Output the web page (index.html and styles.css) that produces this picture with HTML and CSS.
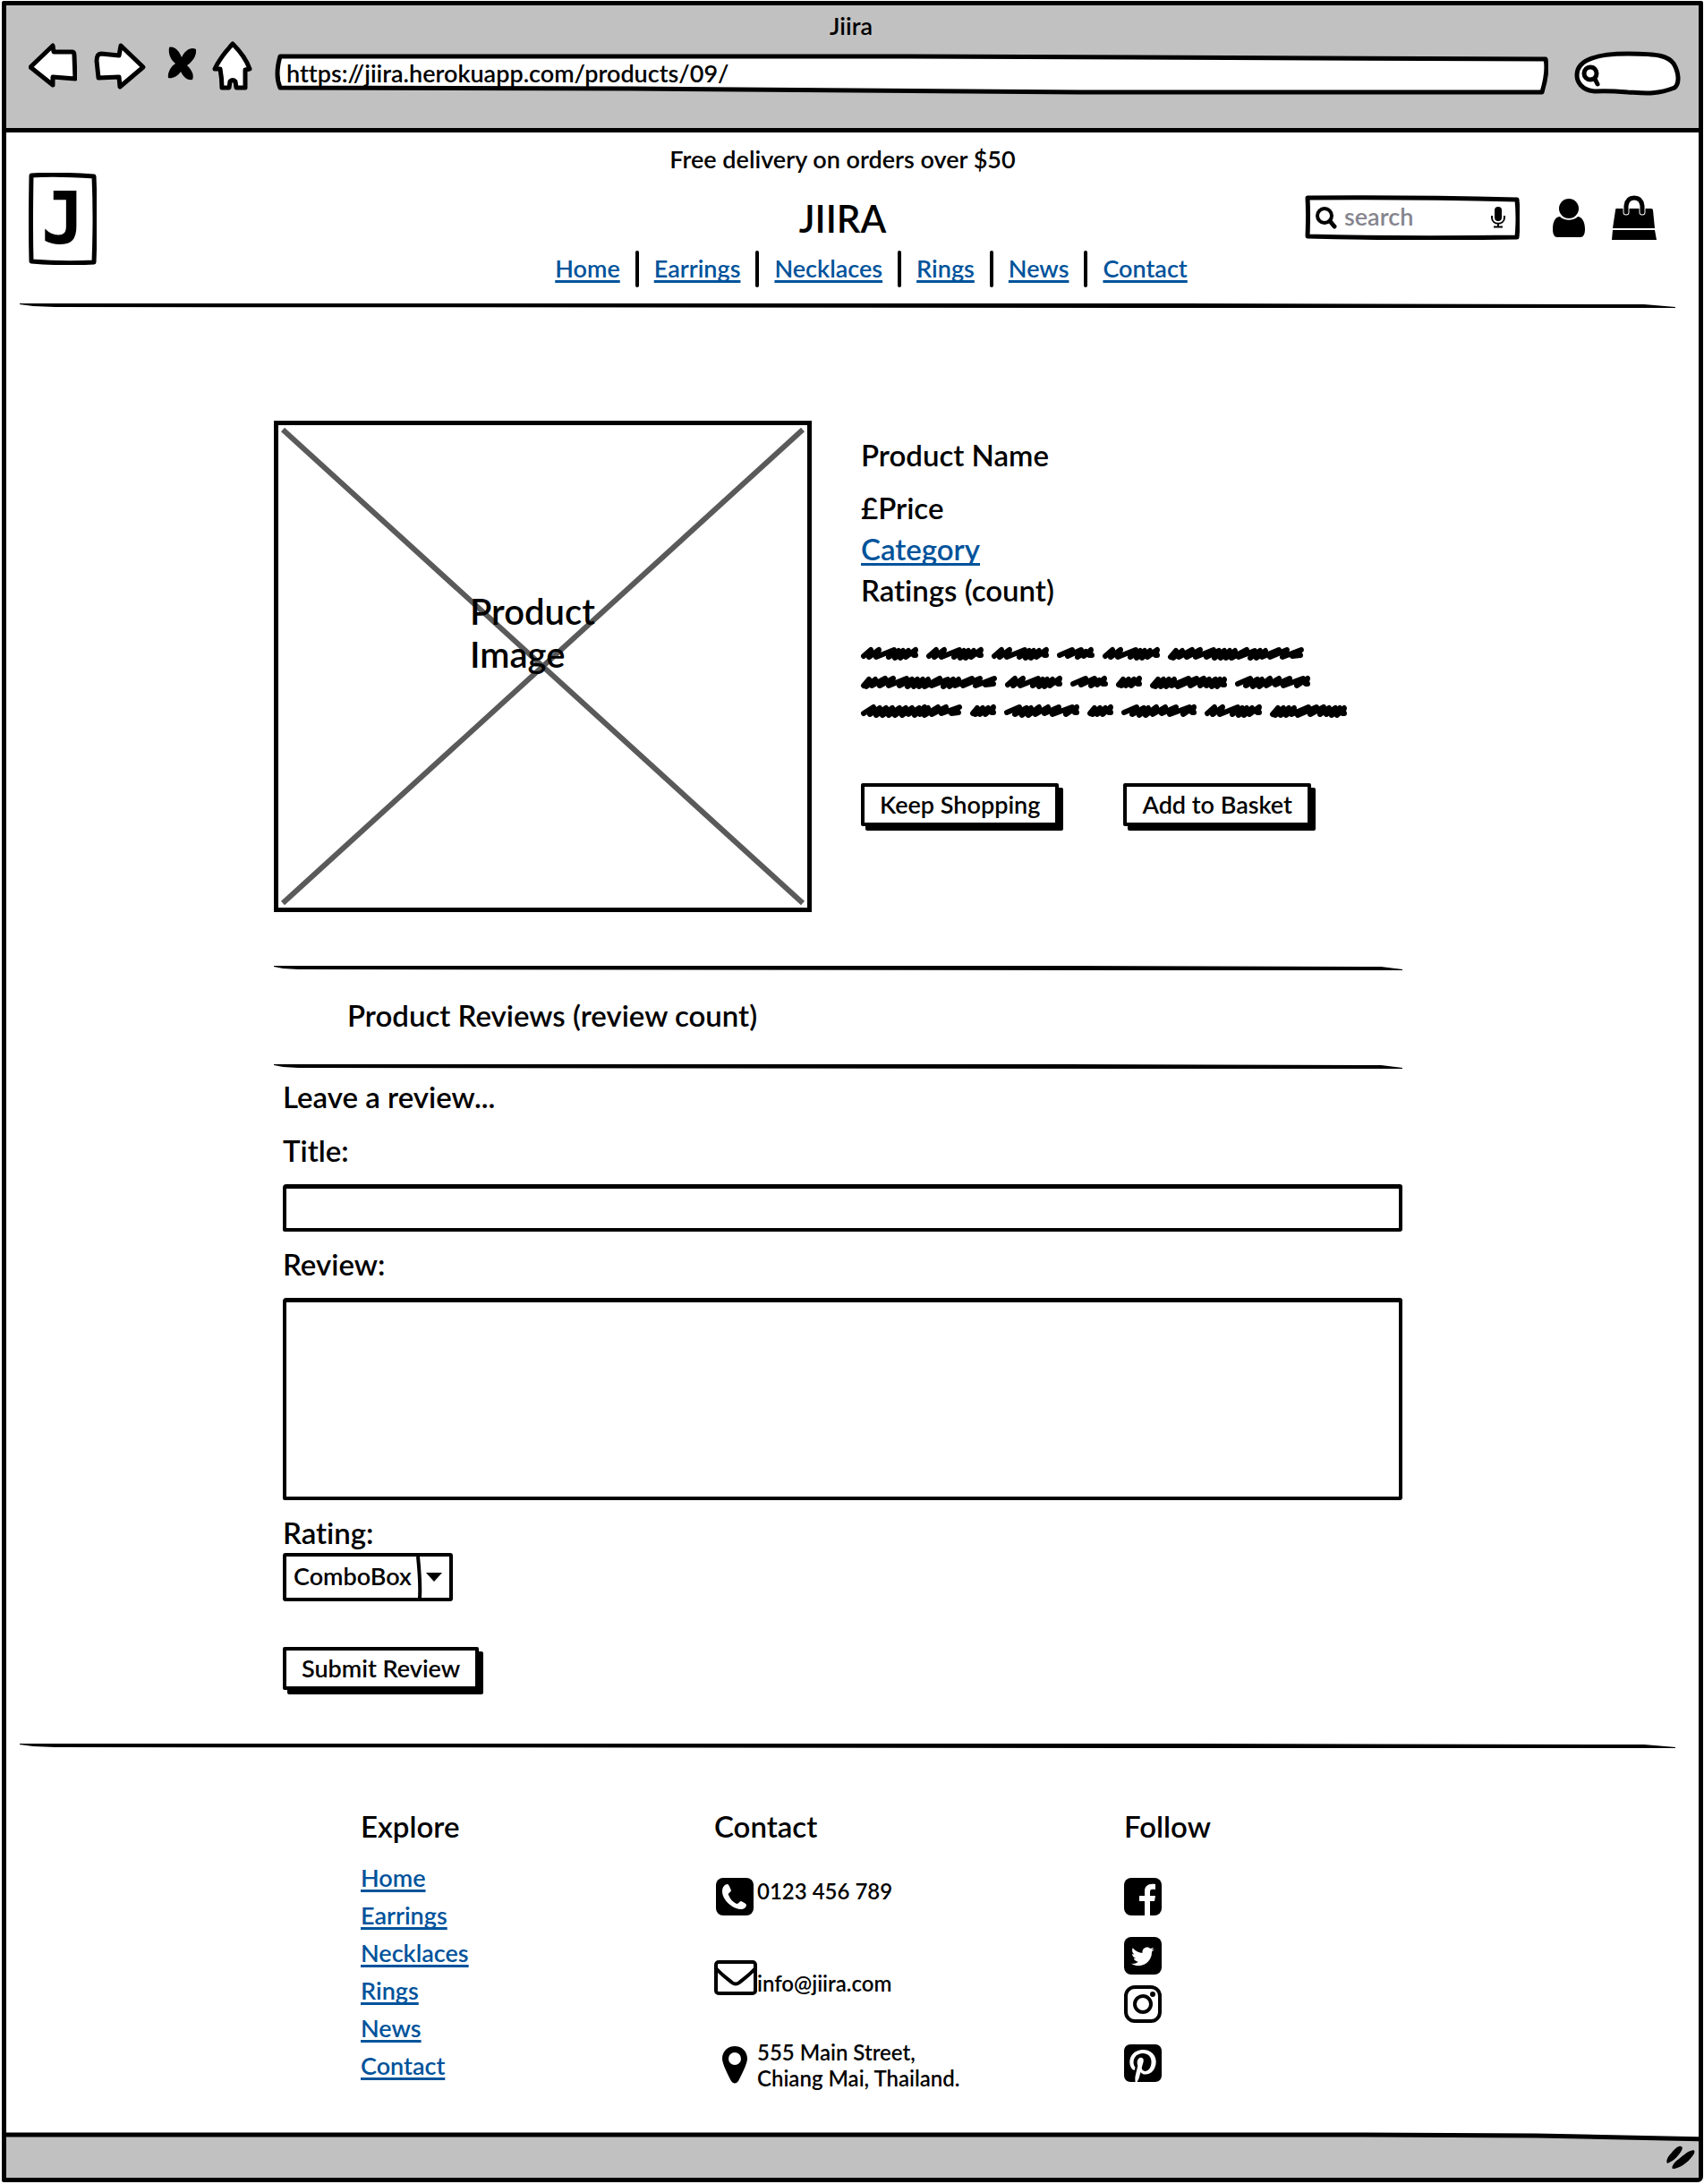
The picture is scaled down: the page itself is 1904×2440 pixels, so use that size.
FILE: index.html
```
<!DOCTYPE html>
<html lang="en">
<head>
<meta charset="utf-8">
<meta name="viewport" content="width=device-width, initial-scale=1">
<title>Jiira</title>
<link rel="stylesheet" href="styles.css">
</head>
<body>
<svg class="defs" aria-hidden="true">
  <symbol id="w29" viewBox="0 0 29 14"><path d="M3 10L8 4 6 11 14 4 11 11 20 4 17 11 26 3 24 9 26 9"/></symbol>
  <symbol id="w42" viewBox="0 0 42 14"><path d="M3 9L17 3 12 10 27 3 23 11 32 5 30 10 38 3 36 9 39 9"/></symbol>
  <symbol id="w64" viewBox="0 0 64 14"><path d="M3 10L11 3 9 11 20 3 17 11 37 3 31 11 42 4 38 12 47 4 44 12 53 4 50 11 61 3 59 9 61 9"/></symbol>
  <symbol id="w84" viewBox="0 0 84 14"><path d="M3 9L17 3 12 11 25 4 20 12 30 4 27 12 39 3 35 11 49 3 45 10 61 3 54 11 76 3 69 11 81 3 79 9 81 9"/></symbol>
  <symbol id="w86" viewBox="0 0 86 14"><path d="M3 11L9 4 6 12 15 4 12 12 21 4 18 12 27 4 24 11 43 3 31 12 52 3 45 11 60 3 56 11 66 4 63 11 73 4 69 12 78 4 75 12 83 4 81 10 83 10"/></symbol>
  <symbol id="w113" viewBox="0 0 113 14"><path d="M3 10L14 3 10 11 21 4 17 12 28 4 24 12 35 4 31 12 43 4 38 12 50 4 46 12 57 4 53 11 65 4 60 12 71 3 66 11 75 4 71 12 86 3 79 11 95 3 90 10 110 3 101 10 109 9"/></symbol>
  <symbol id="w152" viewBox="0 0 152 14"><path d="M3 11L9 4 6 12 16 4 12 11 27 3 21 11 36 3 31 11 51 3 43 11 57 4 52 12 63 4 59 12 69 4 65 12 75 4 71 12 88 3 79 11 97 4 92 12 103 4 99 12 109 4 105 11 124 3 114 11 133 3 128 11 149 3 139 10 148 9"/></symbol>
</svg>

<div class="window">
  <header class="chrome">
    <p class="chrome-title">Jiira</p>
    <div class="toolbar">
      <button class="icon-button" type="button" aria-label="Back"><svg width="54" height="61" viewBox="0 0 54 61"><path class="outline" d="M2 29L27 5 28 12 49 12Q51 12 51 16L52 42 27 40 27 49Z"/></svg></button>
      <button class="icon-button" type="button" aria-label="Forward"><svg width="60" height="61" viewBox="0 0 60 61"><path class="outline" d="M4 22Q4 14 9 14L29 16 31 5 56 29 30 51 29 40 6 41Z"/></svg></button>
      <button class="icon-button" type="button" aria-label="Stop"><svg width="37" height="61" viewBox="0 0 37 61"><path d="M7 7C13 5 18 11 21 18C25 10 31 6 37 9C38 16 33 23 27 27C33 33 35 38 33 43C27 44 23 40 20 34C16 40 10 42 6 41C5 35 9 28 14 25C8 20 6 14 7 7Z"/></svg></button>
      <button class="icon-button" type="button" aria-label="Home"><svg width="45" height="61" viewBox="0 0 45 61"><path class="outline" d="M23 3Q37 17 42 31L37 32 37 52 27 52 26 45Q23 42 20 45L19 52 11 52Q11 42 9 31L3 31Q9 18 23 3Z"/></svg></button>
      <input class="url" type="text" aria-label="Address" value="https://jiira.herokuapp.com/products/09/">
      <input class="chrome-search" type="search" aria-label="Search the web">
    </div>
  </header>

  <div class="page">
    <header class="site-header">
      <div class="logo-side"><a class="logo" href="#">J</a></div>
      <div class="masthead">
        <p class="notice">Free delivery on orders over $50</p>
        <h1>JIIRA</h1>
        <nav class="main-nav" aria-label="Main">
          <a href="#">Home</a><a href="#">Earrings</a><a href="#">Necklaces</a><a href="#">Rings</a><a href="#">News</a><a href="#">Contact</a>
        </nav>
      </div>
      <div class="tools">
        <label class="search">
          <svg width="24" height="25" viewBox="0 0 24 25" aria-hidden="true"><circle cx="10" cy="10" r="8" fill="none" stroke="#000" stroke-width="4"/><path d="M16 16L21 22" stroke="#000" stroke-width="5" stroke-linecap="round"/></svg>
          <input type="search" placeholder="search" aria-label="Search products">
          <svg width="16" height="24" viewBox="0 0 16 24" aria-hidden="true"><rect x="4" y="0" width="8" height="16" rx="4"/><path d="M1 10V12C1 21 15 21 15 12V10M8 18V22M3 22.500H13" fill="none" stroke="#000" stroke-width="2"/></svg>
        </label>
        <a href="#" aria-label="Account"><svg width="43" height="43" viewBox="0 0 43 43"><ellipse cx="25" cy="11" rx="11" ry="11"/><path d="M7 34C7 24 11 20 15 20C20 25 30 25 35 20C39 20 43 25 43 34C43 40 41 43 38 43H12C9 43 7 40 7 34Z"/></svg></a>
        <a href="#" aria-label="Basket"><svg width="50" height="50" viewBox="0 0 50 50"><path d="M5 15H44Q46 15 46 17L48 37H1L4 17Q4 15 5 15ZM1 39H48L50 50H0Z"/><path d="M16 19V12Q17 3 25 3T34 12V19" fill="none" stroke="#fff" stroke-width="7" stroke-linecap="round"/><path d="M16 19V12Q17 3 25 3T34 12V19" fill="none" stroke="#000" stroke-width="5" stroke-linecap="round"/></svg></a>
      </div>
    </header>
    <hr>

    <main class="content">
      <section class="product">
        <figure class="picture">
          <svg viewBox="0 0 591 539" preserveAspectRatio="none" aria-hidden="true"><path d="M5 5L586 534M586 5L5 534"/></svg>
          <figcaption>Product<br>Image</figcaption>
        </figure>
        <div class="info">
          <h2>Product Name</h2>
          <p class="price">£Price</p>
          <p class="tight"><a href="#">Category</a></p>
          <p class="tight">Ratings (count)</p>
          <div class="scribble" role="img" aria-label="Description">
            <div><svg width="64"><use href="#w64"/></svg><svg width="64"><use href="#w64"/></svg><svg width="64"><use href="#w64"/></svg><svg width="42"><use href="#w42"/></svg><svg width="64"><use href="#w64"/></svg><svg width="152"><use href="#w152"/></svg></div>
            <div><svg width="152"><use href="#w152"/></svg><svg width="64"><use href="#w64"/></svg><svg width="42"><use href="#w42"/></svg><svg width="29"><use href="#w29"/></svg><svg width="86"><use href="#w86"/></svg><svg width="84"><use href="#w84"/></svg></div>
            <div><svg width="113"><use href="#w113"/></svg><svg width="29"><use href="#w29"/></svg><svg width="84"><use href="#w84"/></svg><svg width="29"><use href="#w29"/></svg><svg width="84"><use href="#w84"/></svg><svg width="64"><use href="#w64"/></svg><svg width="86"><use href="#w86"/></svg></div>
          </div>
          <div class="actions">
            <button class="button" type="button">Keep Shopping</button>
            <button class="button" type="button">Add to Basket</button>
          </div>
        </div>
      </section>

      <section>
        <hr>
        <h2 class="reviews-title">Product Reviews (review count)</h2>
        <hr>
        <form class="review-form">
          <h2>Leave a review...</h2>
          <label for="title">Title:</label>
          <input id="title" type="text">
          <label class="after-field" for="review">Review:</label>
          <textarea id="review"></textarea>
          <label class="after-field" for="rating">Rating:</label>
          <select id="rating"><option>ComboBox</option></select>
          <button class="button" type="submit">Submit Review</button>
        </form>
      </section>
    </main>

    <hr>
    <footer class="site-footer">
      <section>
        <h2>Explore</h2>
        <ul class="links">
          <li><a href="#">Home</a></li>
          <li><a href="#">Earrings</a></li>
          <li><a href="#">Necklaces</a></li>
          <li><a href="#">Rings</a></li>
          <li><a href="#">News</a></li>
          <li><a href="#">Contact</a></li>
        </ul>
      </section>
      <section>
        <h2>Contact</h2>
        <ul class="contact">
          <li><svg width="48" height="42" viewBox="0 0 48 42" aria-hidden="true"><rect x="2" width="42" height="42" rx="8"/><path fill="#fff" d="M9 15C9 10 12 7 15 7C17 8 18 12 19 14C18 17 15 17 16 19C18 24 21 27 25 29C28 29 28 26 30 26C32 27 35 28 36 30C36 33 33 35 30 35C21 35 9 25 9 15Z"/></svg><span>0123 456 789</span></li>
          <li class="low"><svg width="48" height="40" viewBox="0 0 48 40" aria-hidden="true"><g fill="none" stroke="#000"><rect x="2" y="2" width="44" height="35" rx="3" stroke-width="4"/><path stroke-width="4" d="M2 9C8 16 14 20 20 25Q24 28 28 25C34 20 40 16 46 9"/></g></svg><span>info@jiira.com</span></li>
          <li class="middle"><svg width="48" height="42" viewBox="0 0 48 42" aria-hidden="true"><path fill-rule="evenodd" d="M23 0C31 0 37 6 37 14C37 20 30 33 27 39Q23 44 19 39C16 33 9 20 9 14C9 6 15 0 23 0ZM23 7A7 7 0 1 0 23 21A7 7 0 1 0 23 7Z"/></svg><span>555 Main Street,<br>Chiang Mai, Thailand.</span></li>
        </ul>
      </section>
      <section>
        <h2>Follow</h2>
        <ul class="social">
          <li><a href="#" aria-label="Facebook"><svg width="42" height="42" viewBox="0 0 42 42"><rect width="42" height="42" rx="8"/><path fill="#fff" d="M23 42V26H17V20H23V15C23 9 27 6 35 7V13C30 12 29 13 29 16V20H35L34 26H29V42Z"/></svg></a></li>
          <li class="far"><a href="#" aria-label="Twitter"><svg width="42" height="42" viewBox="0 0 42 42"><rect width="42" height="42" rx="8"/><path fill="#fff" transform="translate(8 9) scale(.05)" d="M459.370 151.716c.325 4.548.325 9.097.325 13.645 0 138.720-105.583 298.558-298.558 298.558-59.452 0-114.680-17.219-161.137-47.106 8.447.974 16.568 1.299 25.340 1.299 49.055 0 94.213-16.568 130.274-44.832-46.132-.975-84.792-31.188-98.112-72.772 6.498.974 12.995 1.624 19.818 1.624 9.421 0 18.843-1.300 27.614-3.573-48.081-9.747-84.143-51.980-84.143-102.985v-1.299c13.969 7.797 30.214 12.670 47.431 13.319-28.264-18.843-46.781-51.005-46.781-87.391 0-19.492 5.197-37.360 14.294-52.954 51.655 63.675 129.300 105.258 216.365 109.807-1.624-7.797-2.599-15.918-2.599-24.040 0-57.828 46.782-104.934 104.934-104.934 30.213 0 57.502 12.670 76.670 33.137 23.715-4.548 46.456-13.320 66.599-25.340-7.798 24.366-24.366 44.833-46.132 57.827 21.117-2.273 41.584-8.122 60.426-16.243-14.292 20.791-32.161 39.308-52.628 54.253z"/></svg></a></li>
          <li><a href="#" aria-label="Instagram"><svg width="42" height="42" viewBox="0 0 42 42"><g fill="none" stroke="#000" stroke-width="4"><rect x="2" y="2" width="38" height="38" rx="10"/><circle cx="21" cy="21" r="9"/></g><circle cx="32" cy="10" r="3"/></svg></a></li>
          <li class="far"><a href="#" aria-label="Pinterest"><svg width="42" height="42" viewBox="0 32 448 448"><path d="M448 112v288c0 48-32 80-80 80H154.400c9.800-16.400 22.400-40 27.400-59.300 3-11.500 15.300-58.400 15.300-58.400 8 15.300 31.400 28.200 56.300 28.200 74.100 0 127.400-68.100 127.400-152.700 0-81.100-66.200-141.800-151.400-141.800-106 0-162.200 71.100-162.200 148.600 0 36 19.200 80.800 49.800 95.100 4.700 2.200 7.100 1.200 8.200-3.300.8-3.400 5-20.100 6.800-27.800.6-2.500.3-4.600-1.700-7-10.100-12.300-18.300-34.900-18.300-56 0-54.200 41-106.600 110.900-106.600 60.300 0 102.600 41.100 102.600 99.900 0 66.400-33.500 112.400-77.200 112.400-24.100 0-42.100-19.900-36.400-44.400 6.900-29.200 20.300-60.700 20.300-81.800 0-53-75.500-45.700-75.500 25 0 21.700 7.300 36.500 7.300 36.500-31.400 132.800-36.100 134.500-29.600 192.600l2.200.8H80c-48 0-80-32-80-80V112c0-48 32-80 80-80h288c48 0 80 32 80 80z"/></svg></a></li>
        </ul>
      </section>
    </footer>
  </div>

  <div class="status-bar">
    <svg width="34" height="28" viewBox="0 0 34 28" aria-hidden="true"><path d="M15 1C20 0 20 4 15 10C11 15 7 18 2 20C0 17 3 12 6 9C9 5 12 2 15 1ZM28 6C33 4 34 7 30 12C25 19 15 26 8 26C6 24 10 18 15 15C20 11 24 7 28 6Z"/></svg>
  </div>
</div>
</body>
</html>
```
FILE: styles.css
```
* { box-sizing: border-box; }

body {
  margin: 0;
  background: #fff;
  color: #000;
  font: 600 27px/36px Lato, "Open Sans", sans-serif;
  font-variant-ligatures: none;
}

h1, h2, p, ul, figure { margin: 0; padding: 0; }
ul { list-style: none; }
h1, h2 { font-weight: 600; }
h2, .info, label { font-size: 33px; line-height: 40px; }
svg { display: block; flex: none; }
input, textarea, select, button { font: inherit; color: inherit; font-variant-ligatures: none; }
.defs { position: absolute; width: 0; height: 0; }

a {
  color: #00539b;
  text-decoration-thickness: 3px;
  text-underline-offset: 3px;
  text-decoration-skip-ink: none;
}

/* Pen-stroke rule, tapered at both ends */
hr {
  height: 5px;
  margin: 0;
  border: 0;
  background: url("data:image/svg+xml,%3Csvg xmlns='http://www.w3.org/2000/svg' viewBox='0 0 1850 5' preserveAspectRatio='none'%3E%3Cpath d='M0 0L1300 0 1815 1 1850 4 1850 5 1400 5 40 4 15 3 0 1Z'/%3E%3C/svg%3E") 0 0 / 100% 100% no-repeat;
}

/* Browser window */
.window {
  display: flex;
  flex-direction: column;
  min-height: calc(100vh - 3px);
  margin: 1px 1px 2px 2px;
  border: 5px solid #000;
  border-radius: 2px 2px 6px 2px;
}

.chrome {
  padding: 6px 20px 36px 25px;
  border-bottom: 5px solid #000;
  background: #c1c1c1;
}

.chrome-title {
  padding-right: 8px;
  line-height: 34px;
  text-align: center;
}

.toolbar {
  display: flex;
  align-items: center;
  gap: 18px;
}

.icon-button {
  height: 61px;
  padding: 0;
  border: 0;
  background: none;
}

.outline {
  fill: #fff;
  stroke: #000;
  stroke-width: 5px;
  stroke-linejoin: round;
}

.url {
  flex: 1;
  min-width: 0;
  height: 46px;
  margin: 12px 11px 0 7px;
  padding: 0 13px 2px;
  border: 0;
  background: url("data:image/svg+xml,%3Csvg xmlns='http://www.w3.org/2000/svg' viewBox='0 0 1423 46' preserveAspectRatio='none'%3E%3Cpath d='M6 3L700 3 1420 6Q1423 20 1416 43L900 43 400 39 6 38Q0 24 6 3Z' fill='%23fff' stroke='%23000' stroke-width='5' stroke-linejoin='round'/%3E%3C/svg%3E") 0 0 / 100% 100% no-repeat;
}

.chrome-search {
  width: 119px;
  height: 50px;
  margin-top: 10px;
  padding: 0 12px 0 36px;
  border: 0;
  background: url("data:image/svg+xml,%3Csvg xmlns='http://www.w3.org/2000/svg' viewBox='0 0 119 50'%3E%3Cg stroke='%23000' stroke-width='5' stroke-linecap='round'%3E%3Cpath d='M23 45C8 44 3 34 3 27C3 12 20 3 60 3C96 3 105 6 111 14C117 24 118 36 112 41C92 49 78 47 60 46Q36 44 23 45Z' fill='%23fff'/%3E%3Ccircle cx='18' cy='25' r='7' fill='none'/%3E%3Cpath d='M23 31L26 37'/%3E%3C/g%3E%3C/svg%3E") 0 0 no-repeat;
}

/* Site */
.page {
  flex: 1;
  padding: 0 26px 0 15px;
}

.site-header {
  display: flex;
  align-items: flex-start;
  padding: 13px 21px 18px 10px;
}

.logo-side { flex: 1; padding-top: 32px; }

.logo {
  display: flex;
  align-items: center;
  justify-content: center;
  width: 76px;
  height: 103px;
  background: url("data:image/svg+xml,%3Csvg xmlns='http://www.w3.org/2000/svg' viewBox='0 0 76 103'%3E%3Cpath d='M3 3Q30 1 73 4Q75 50 73 100Q40 102 3 99Q2 60 3 3Z' fill='none' stroke='%23000' stroke-width='5' stroke-linejoin='round'/%3E%3C/svg%3E") 0 0 no-repeat;
  color: #000;
  font: 700 80px/96px "DejaVu Sans Mono", monospace;
  text-decoration: none;
}

.masthead { text-align: center; }
.notice { line-height: 34px; }

h1 {
  margin: 25px 0 11px;
  font-size: 42px;
  line-height: 49px;
}

.main-nav {
  display: flex;
  gap: 17px;
  height: 41px;
  margin-left: 64px;
  line-height: 39px;
}

.main-nav a + a::before {
  content: "";
  float: left;
  width: 4px;
  height: 41px;
  margin-right: 17px;
  border-radius: 2px;
  background: #000;
}

.tools {
  display: flex;
  flex: 1;
  align-items: center;
  justify-content: flex-end;
  gap: 30px;
  padding-top: 57px;
}

.search {
  display: flex;
  align-items: center;
  gap: 8px;
  width: 240px;
  height: 50px;
  padding: 0 16px 0 12px;
  background: url("data:image/svg+xml,%3Csvg xmlns='http://www.w3.org/2000/svg' viewBox='0 0 240 50'%3E%3Cpath d='M3 3Q110 2 237 5Q239 25 237 47Q110 49 3 46Q4 20 3 3Z' fill='%23fff' stroke='%23000' stroke-width='5' stroke-linejoin='round'/%3E%3C/svg%3E") 0 0 no-repeat;
  font-size: 27px;
}

.search input {
  flex: 1;
  min-width: 0;
  padding: 0 0 2px;
  border: 0;
  background: none;
}

.search input::placeholder { color: #85858f; opacity: 1; }

/* Product */
.content {
  max-width: 1282px;
  margin: 0 auto;
  padding-right: 21px;
}

.product {
  display: flex;
  gap: 55px;
  padding: 126px 0 60px;
}

.picture {
  display: grid;
  flex: 0 0 601px;
  height: 549px;
  border: 5px solid #000;
}

.picture > * { grid-area: 1 / 1; }
.picture svg { width: 100%; height: 100%; }
.picture path { stroke: #5a5a5a; stroke-width: 6px; }

.picture figcaption {
  padding: 184px 0 0 214px;
  font-size: 40px;
  line-height: 48px;
}

.info { flex: 1; padding-top: 18px; }
.price { margin-top: 19px; }
.tight { margin-top: 6px; }

.scribble {
  display: grid;
  gap: 18px;
  margin-top: 44px;
}

.scribble div { display: flex; gap: 9px; }
.scribble svg { height: 14px; overflow: visible; }

symbol { overflow: visible; }

symbol path {
  fill: none;
  stroke: #000;
  stroke-width: 6px;
  stroke-linecap: round;
  stroke-linejoin: round;
}

.actions {
  display: flex;
  gap: 72px;
  margin-top: 74px;
}

.button {
  height: 48px;
  padding: 0 17px;
  border: 4px solid #000;
  border-radius: 2px;
  background: #fff;
  box-shadow: 5px 5px 0 #000;
  font-size: 27px;
  line-height: 40px;
}

/* Reviews */
.reviews-title { padding: 30px 82px 35px; }

.review-form {
  display: flex;
  flex-direction: column;
  align-items: flex-start;
  padding: 11px 0 60px 10px;
}

.review-form label { margin-top: 20px; }
.review-form .after-field { margin-top: 16px; }

.review-form input,
.review-form textarea {
  display: block;
  width: 100%;
  height: 53px;
  margin-top: 18px;
  padding: 8px;
  border: 4px solid #000;
  border-top-width: 5px;
  border-radius: 4px 3px 3px 2px;
  background: #fff;
}

.review-form textarea { height: 226px; resize: none; }

.review-form select {
  appearance: none;
  width: 190px;
  height: 54px;
  margin: 3px 0 51px;
  padding: 0 36px 2px 8px;
  border: 4px solid #000;
  border-radius: 3px;
  background: url("data:image/svg+xml,%3Csvg xmlns='http://www.w3.org/2000/svg' viewBox='0 0 38 46'%3E%3Cpath d='M3 0Q6 30 5 46' fill='none' stroke='%23000' stroke-width='4'/%3E%3Cpath d='M12 18H30L21 28Z'/%3E%3C/svg%3E") right 0 / 38px 46px no-repeat;
}

/* Footer */
.site-footer {
  display: grid;
  grid-template-columns: 395px 458px 1fr;
  max-width: 1282px;
  margin: 0 auto;
  padding: 67px 21px 40px 97px;
}

.links { padding-top: 17px; line-height: 42px; }

.contact {
  display: grid;
  gap: 48px;
  padding-top: 38px;
  font-size: 24px;
  line-height: 29px;
}

.contact li { display: flex; min-height: 42px; }
.contact .low { align-items: flex-end; }
.contact .middle { align-items: center; }

.social { padding-top: 38px; }
.social li { margin-top: 12px; }
.social li:first-child { margin-top: 0; }
.social .far { margin-top: 24px; }
.social svg { fill: #000; }

.status-bar {
  display: flex;
  align-items: center;
  justify-content: flex-end;
  height: 51px;
  padding: 6px 3px 0;
  background: url("data:image/svg+xml,%3Csvg xmlns='http://www.w3.org/2000/svg' viewBox='0 0 1891 51' preserveAspectRatio='none'%3E%3Cpath d='M0 0H1891V51H0Z' fill='%23fff'/%3E%3Cpath d='M-9 3L1500 3 1710 4 1900 8V70H-9Z' fill='%23c1c1c1' stroke='%23000' stroke-width='5'/%3E%3C/svg%3E") 0 0 / 100% 100% no-repeat;
}
```
